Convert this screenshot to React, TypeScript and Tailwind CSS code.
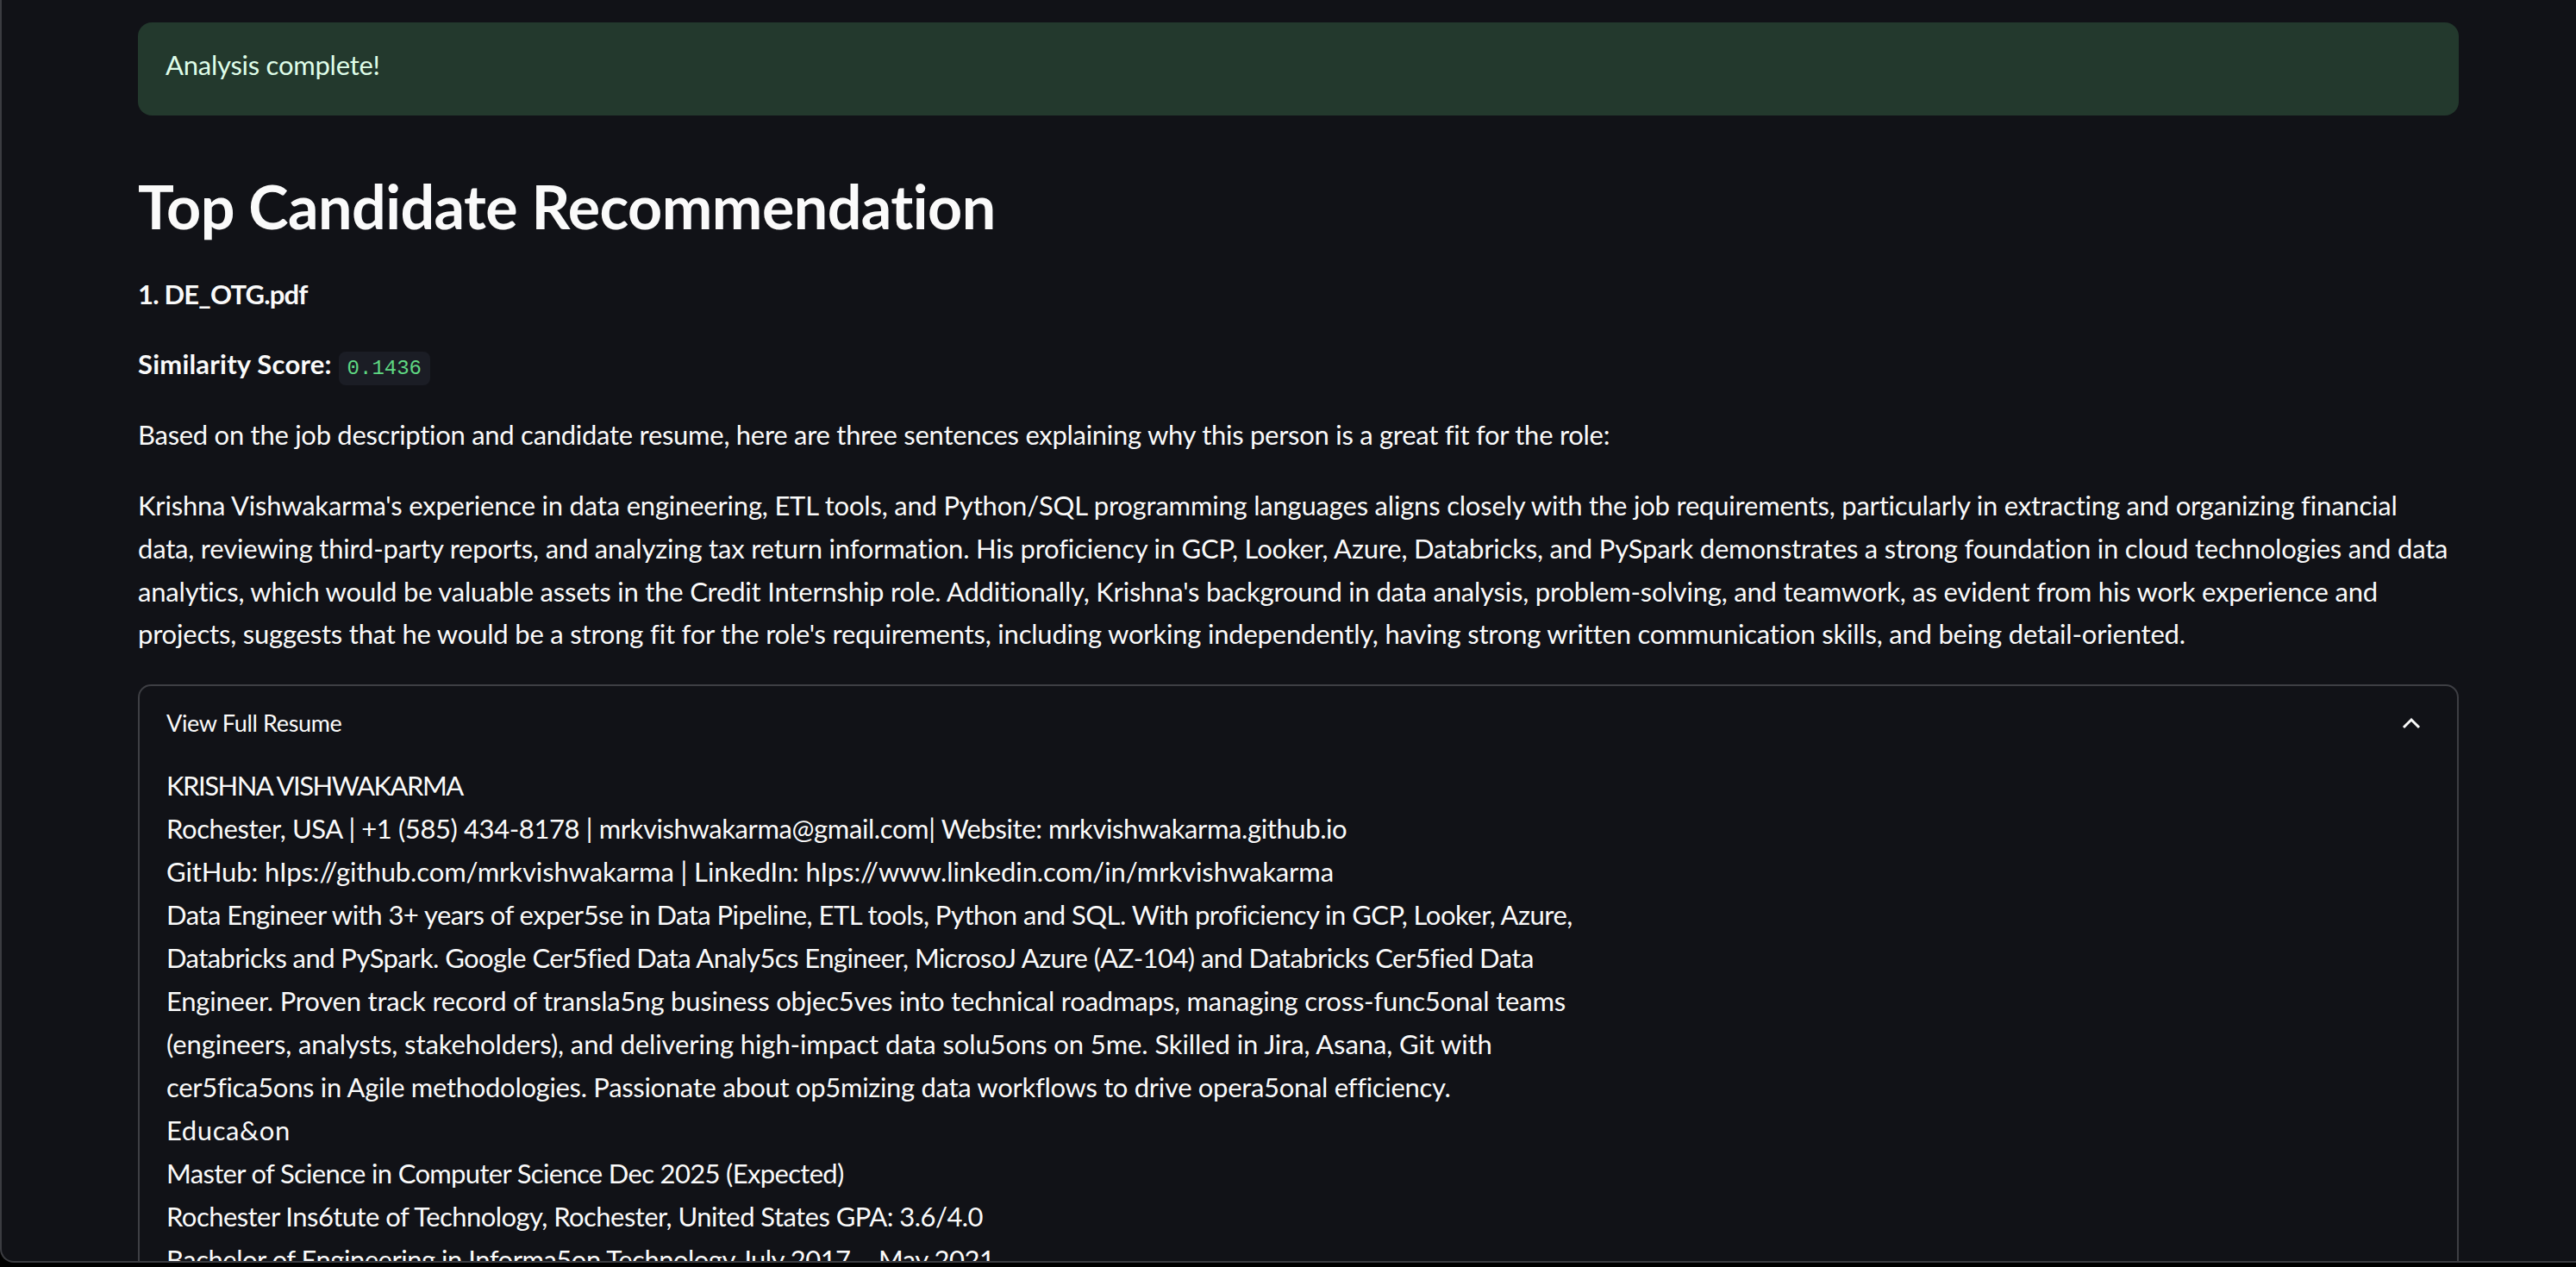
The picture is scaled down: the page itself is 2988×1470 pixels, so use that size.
import React from 'react';

const paragraph = [
  "Krishna Vishwakarma's experience in data engineering, ETL tools, and Python/SQL programming languages aligns closely with the job requirements, particularly in extracting and organizing financial",
  "data, reviewing third-party reports, and analyzing tax return information. His proficiency in GCP, Looker, Azure, Databricks, and PySpark demonstrates a strong foundation in cloud technologies and data",
  "analytics, which would be valuable assets in the Credit Internship role. Additionally, Krishna's background in data analysis, problem-solving, and teamwork, as evident from his work experience and",
  "projects, suggests that he would be a strong fit for the role's requirements, including working independently, having strong written communication skills, and being detail-oriented.",
];

// text of the resume, with a per-line tracking to keep the widths of the original
const resume: [string, string][] = [
  ['KRISHNA VISHWAKARMA', 'tracking-[-1.5px]'],
  ['Rochester, USA | +1 (585) 434-8178 | mrkvishwakarma@gmail.com| Website: mrkvishwakarma.github.io', 'tracking-[-0.4px]'],
  ['GitHub: hIps://github.com/mrkvishwakarma | LinkedIn: hIps://www.linkedin.com/in/mrkvishwakarma', 'tracking-[-0.1px]'],
  ['Data Engineer with 3+ years of exper5se in Data Pipeline, ETL tools, Python and SQL. With proficiency in GCP, Looker, Azure,', 'tracking-[-0.52px]'],
  ['Databricks and PySpark. Google Cer5fied Data Analy5cs Engineer, MicrosoJ Azure (AZ-104) and Databricks Cer5fied Data', 'tracking-[-0.57px]'],
  ['Engineer. Proven track record of transla5ng business objec5ves into technical roadmaps, managing cross-func5onal teams', 'tracking-[-0.2px]'],
  ['(engineers, analysts, stakeholders), and delivering high-impact data solu5ons on 5me. Skilled in Jira, Asana, Git with', 'tracking-[-0.1px]'],
  ['cer5fica5ons in Agile methodologies. Passionate about op5mizing data workflows to drive opera5onal efficiency.', 'tracking-[-0.31px]'],
  ['Educa&on', 'tracking-[0.6px]'],
  ['Master of Science in Computer Science Dec 2025 (Expected)', 'tracking-[-0.67px]'],
  ['Rochester Ins6tute of Technology, Rochester, United States GPA: 3.6/4.0', 'tracking-[-0.55px]'],
  ['Bachelor of Engineering in Informa5on Technology July 2017 – May 2021', 'tracking-[-0.5px]'],
];

export default function App() {
  return (
    <div className="w-[2988px] h-[1470px] bg-black overflow-hidden font-['Lato',sans-serif] text-[#fafafa]">
      <div className="h-[1465px] bg-[#111217] border-l-2 border-b-2 border-[#3b3c41] rounded-bl-[16px] overflow-hidden pl-[158px] pr-[136px] pt-[26px]">
        <div className="h-[108px] rounded-[16px] bg-[#23392d] px-[32px] pt-[25px] text-[31px] leading-[49.6px] tracking-[-0.25px] text-[#dffde9]">
          Analysis complete!
        </div>
        <h1 className="mt-[63px] text-[70px] leading-[84px] font-bold tracking-[-0.55px]">Top Candidate Recommendation</h1>
        <p className="mt-[36px] text-[31px] leading-[49.6px] font-bold tracking-[-0.8px]">1. DE_OTG.pdf</p>
        <p className="mt-[31.6px] text-[31px] leading-[49.6px]">
          <span className="font-bold tracking-[0.2px]">Similarity Score:</span>{' '}
          <code className="inline-flex items-center h-[39px] px-[10px] rounded-[8px] bg-[#1b1d25] text-[#5fd882] text-[24px] font-['Liberation_Mono',monospace]">
            0.1436
          </code>
        </p>
        <p className="mt-[32px] text-[31px] leading-[49.6px] tracking-[-0.28px]">
          Based on the job description and candidate resume, here are three sentences explaining why this person is a great fit for the role:
        </p>
        <div className="mt-[33px] text-[31px] leading-[49.6px] tracking-[-0.2px]">
          {paragraph.map((l) => (
            <div key={l} className="whitespace-nowrap">{l}</div>
          ))}
        </div>
        <div className="mt-[33px] border-2 border-[#3e3f44] rounded-[15px] h-[900px]">
          <div className="flex items-center justify-between pl-[31px] pr-[42px] pt-[23.6px] h-[63.6px] text-[27px] leading-[40px] tracking-[-0.34px]">
            <span>View Full Resume</span>
            <svg width="22" height="14" viewBox="0 0 22 14" fill="none" stroke="#fafafa" strokeWidth="3">
              <path d="M2 12 L11 3 L20 12" />
            </svg>
          </div>
          <div className="mt-[26.4px] pl-[31px] text-[31px] leading-[50px]">
            {resume.map(([l, t]) => (
              <div key={l} className={`whitespace-nowrap ${t}`}>{l}</div>
            ))}
          </div>
        </div>
      </div>
    </div>
  );
}
